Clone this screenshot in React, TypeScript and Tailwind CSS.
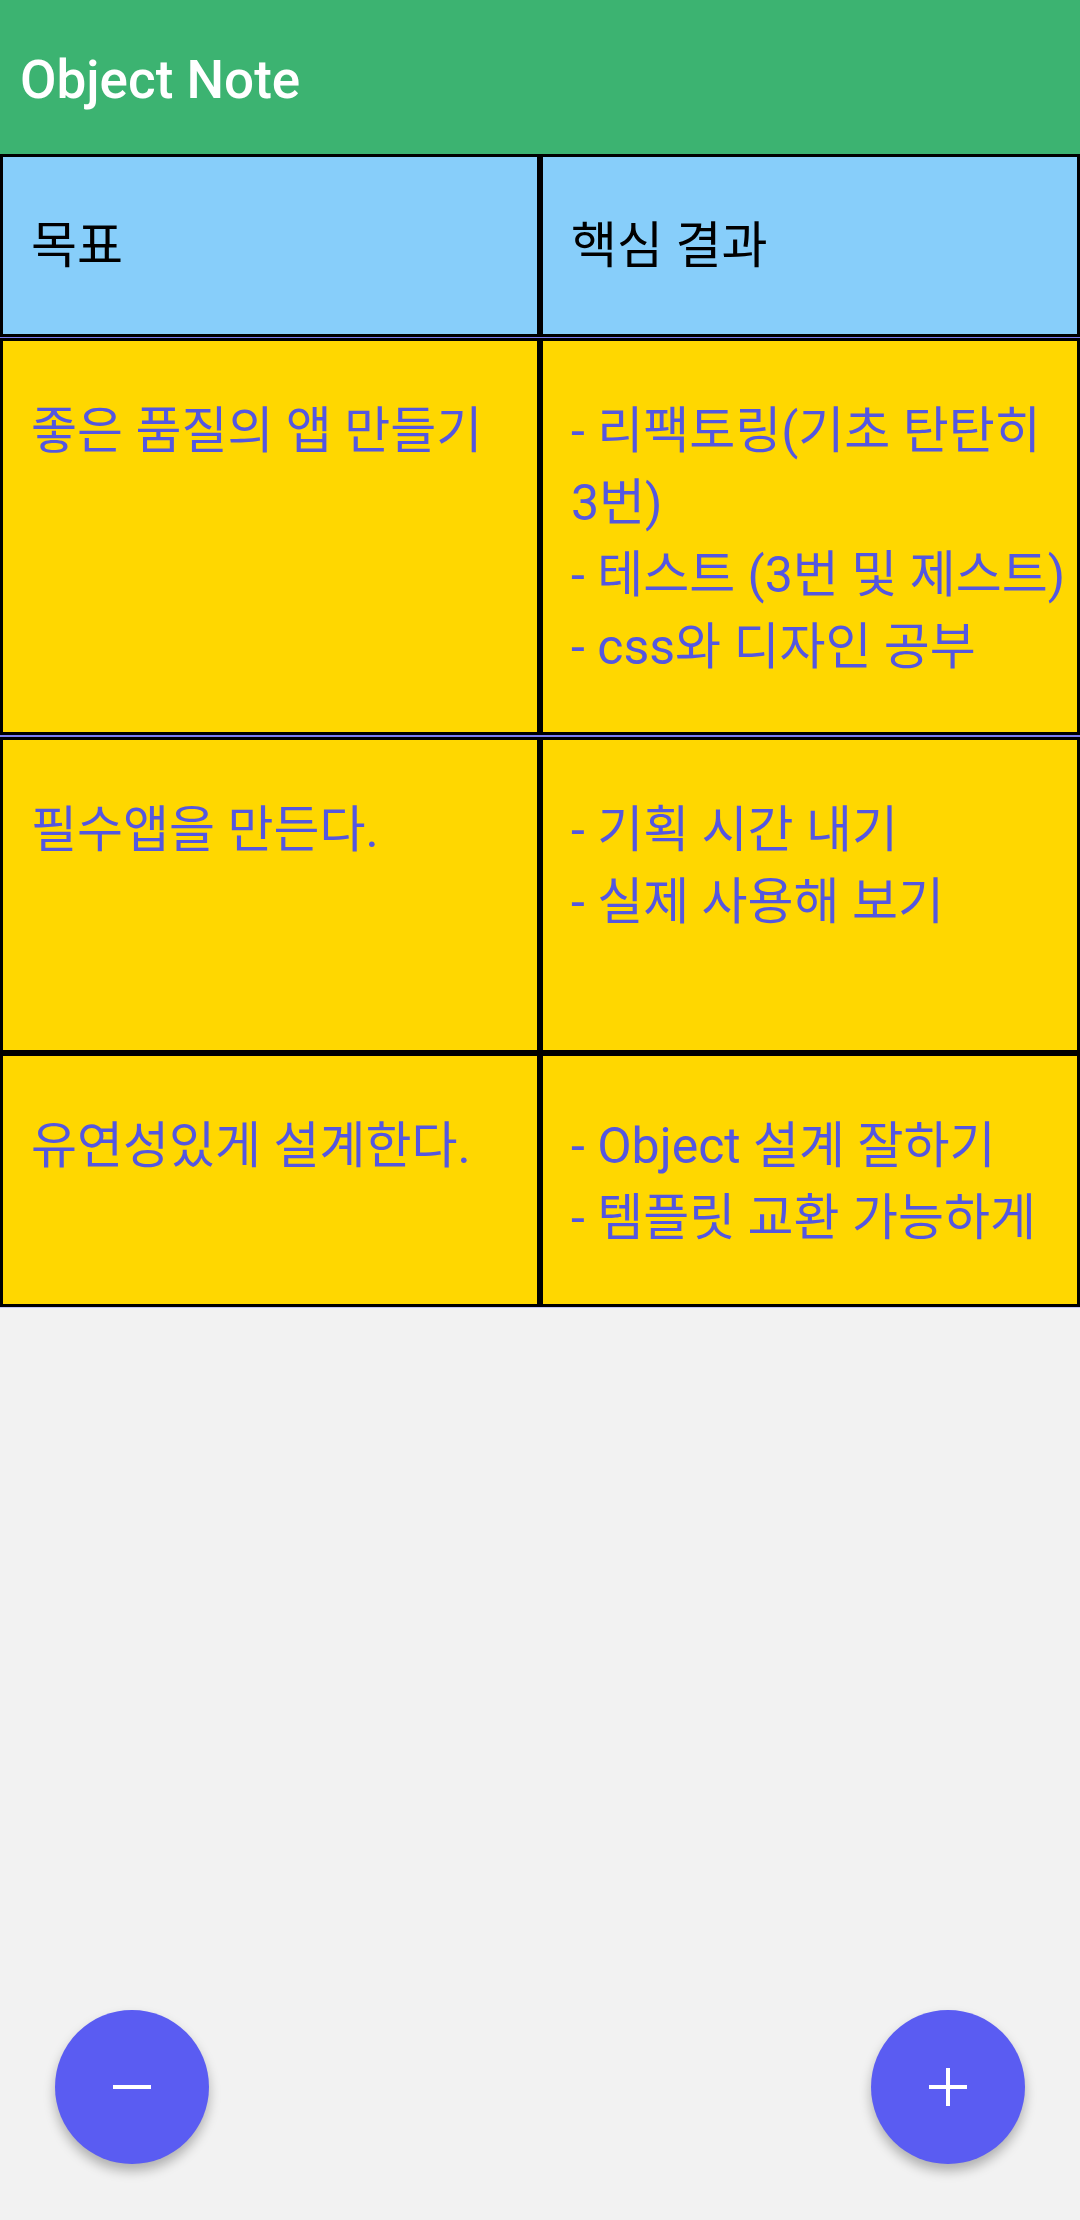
import React from "react";

const font = { fontFamily: 'Roboto, "Noto Sans CJK KR", sans-serif' };

function Cell({
  children,
  bg,
  color,
  center,
}: {
  children: React.ReactNode;
  bg: string;
  color: string;
  center?: boolean;
}) {
  return (
    <div
      className={`w-1/2 border-[3px] border-black ${bg} ${color} pl-[28px] text-[50px] leading-[72px] whitespace-nowrap ${
        center ? "flex items-center" : "pt-[54px]"
      }`}
    >
      <div>{children}</div>
    </div>
  );
}

export default function App() {
  return (
    <div className="relative w-[1080px] h-[2220px] bg-[#f2f2f2] overflow-hidden" style={font}>
      <div className="h-[154px] bg-[#3cb371] flex items-center pl-[20px] pt-[8px]">
        <span className="text-white text-[53px] font-medium">Object Note</span>
      </div>

      <div className="flex h-[183px]">
        <Cell bg="bg-[#87cefa]" color="text-black" center>
          목표
        </Cell>
        <Cell bg="bg-[#87cefa]" color="text-black" center>
          핵심 결과
        </Cell>
      </div>
      <div className="h-px bg-[#7b7df2]" />

      <div className="flex h-[397px]">
        <Cell bg="bg-[#ffd700]" color="text-[#5457e0]">
          좋은 품질의 앱 만들기
        </Cell>
        <Cell bg="bg-[#ffd700]" color="text-[#5457e0]">
          - 리팩토링(기초 탄탄히
          <br />
          3번)
          <br />
          - 테스트 (3번 및 제스트)
          <br />
          - css와 디자인 공부
        </Cell>
      </div>
      <div className="h-[2px] bg-[#7b7df2]" />

      <div className="flex h-[316px]">
        <Cell bg="bg-[#ffd700]" color="text-[#5457e0]">
          필수앱을 만든다.
        </Cell>
        <Cell bg="bg-[#ffd700]" color="text-[#5457e0]">
          - 기획 시간 내기
          <br />
          - 실제 사용해 보기
        </Cell>
      </div>

      <div className="flex h-[254px]">
        <Cell bg="bg-[#ffd700]" color="text-[#5457e0]">
          유연성있게 설계한다.
        </Cell>
        <Cell bg="bg-[#ffd700]" color="text-[#5457e0]">
          - Object 설계 잘하기
          <br />
          - 템플릿 교환 가능하게
        </Cell>
      </div>
      <div className="h-px bg-[#c5c6f5]" />

      <button className="absolute left-[55px] bottom-[56px] w-[154px] h-[154px] rounded-full bg-[#5a5cf2] shadow-[0_7px_12px_rgba(0,0,0,0.28)] flex items-center justify-center">
        <svg width="40" height="40" viewBox="0 0 40 40">
          <rect x="1" y="18" width="38" height="4" fill="white" />
        </svg>
      </button>
      <button className="absolute right-[55px] bottom-[56px] w-[154px] h-[154px] rounded-full bg-[#5a5cf2] shadow-[0_7px_12px_rgba(0,0,0,0.28)] flex items-center justify-center">
        <svg width="40" height="40" viewBox="0 0 40 40">
          <rect x="1" y="18" width="38" height="4" fill="white" />
          <rect x="18" y="1" width="4" height="38" fill="white" />
        </svg>
      </button>
    </div>
  );
}
